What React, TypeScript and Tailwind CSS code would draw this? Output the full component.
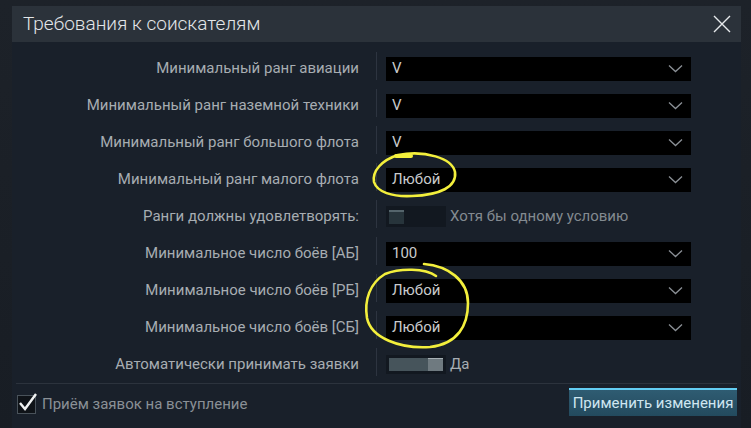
import React from "react";

const font = { fontFamily: "Roboto, 'Noto Sans', sans-serif" };

function Chevron() {
  return (
    <svg width="15" height="9" viewBox="0 0 15 9" className="shrink-0">
      <path d="M1 1.5 L7.5 7.5 L14 1.5" fill="none" stroke="#8b9096" strokeWidth="1.3" />
    </svg>
  );
}

function Select({ value }: { value: string }) {
  return (
    <div className="flex h-[24px] w-[305px] items-center justify-between bg-black pl-[6px] pr-[8px]">
      <span className="text-[15px] text-[#c9cbcc]">{value}</span>
      <Chevron />
    </div>
  );
}

function Toggle({ on }: { on: boolean }) {
  if (on) {
    return (
      <div className="flex h-[19px] w-[60px] items-center bg-[#121820] px-[3px]">
        <div className="h-[13px] w-[39px] bg-[#46545b]" />
        <div className="h-[13px] w-[15px] border-t border-[#a7b0b5] bg-[#6f7a80]" />
      </div>
    );
  }
  return (
    <div className="flex h-[21px] w-[60px] items-center bg-[#121820] px-[3px]">
      <div className="h-[14px] w-[15px] border-t-2 border-[#55656c] bg-[#27343b]" />
    </div>
  );
}

function Row({ label, children }: { label: string; children: React.ReactNode }) {
  return (
    <div className="flex h-[37px] items-center">
      <div className="w-[347px] text-right text-[15px] text-[#a7adb2]">{label}</div>
      <div className="ml-[17px] mb-[6px] h-[28px] w-px bg-[#2d3440]" />
      <div className="ml-[9px] flex items-center">{children}</div>
    </div>
  );
}

export default function App() {
  return (
    <div
      className="relative h-[428px] w-[751px] overflow-hidden bg-gradient-to-b from-[#1d2229] to-[#181d24] pl-[12px] pr-[10px] pt-[6px]"
      style={font}
    >
      <div className="flex h-[36px] items-center justify-between bg-[#2b323a] pl-[11px] pr-[10px]">
        <span className="text-[19px] font-light text-[#e3e6e9]">Требования к соискателям</span>
        <svg width="18" height="18" viewBox="0 0 18 18">
          <path d="M1 1 L17 17 M17 1 L1 17" stroke="#e6e9eb" strokeWidth="1.4" />
        </svg>
      </div>
      <div className="h-[386px] bg-[#19202a] pt-[8px]">
        <Row label="Минимальный ранг авиации"><Select value="V" /></Row>
        <Row label="Минимальный ранг наземной техники"><Select value="V" /></Row>
        <Row label="Минимальный ранг большого флота"><Select value="V" /></Row>
        <Row label="Минимальный ранг малого флота"><Select value="Любой" /></Row>
        <Row label="Ранги должны удовлетворять:">
          <Toggle on={false} />
          <span className="ml-[4px] text-[15px] text-[#838a90]">Хотя бы одному условию</span>
        </Row>
        <Row label="Минимальное число боёв [АБ]"><Select value="100" /></Row>
        <Row label="Минимальное число боёв [РБ]"><Select value="Любой" /></Row>
        <Row label="Минимальное число боёв [СБ]"><Select value="Любой" /></Row>
        <Row label="Автоматически принимать заявки">
          <Toggle on={true} />
          <span className="ml-[4px] text-[15px] text-[#a7adb2]">Да</span>
        </Row>
        <div className="mx-[4px] flex items-start justify-between border-t border-[#2c333d] pt-[4px]">
          <div className="mt-[5px] flex items-center">
            <div className="relative ml-[1px] h-[19px] w-[19px] border border-[#49525a] bg-[#0f1318]">
              <svg width="22" height="20" viewBox="0 0 22 20" className="absolute -left-[1px] -top-[4px]">
                <path d="M3 11 L8 17 L19 2" fill="none" stroke="#f0f2f3" strokeWidth="2.4" />
              </svg>
            </div>
            <span className="ml-[6px] text-[15px] text-[#8a9096]">Приём заявок на вступление</span>
          </div>
          <button className="h-[28px] w-[168px] border-t-2 border-[#63cdf2] bg-gradient-to-b from-[#2f5c72] to-[#234a5e] text-[15px] text-[#cfe6f1]">
            Применить изменения
          </button>
        </div>
      </div>
      <svg
        className="pointer-events-none absolute left-0 top-0"
        width="751"
        height="428"
        viewBox="0 0 751 428"
      >
        <g fill="none" stroke="#f3ef3c" strokeWidth="2.6" strokeLinecap="round" strokeLinejoin="round">
          <path d="M396 156 L411 156" strokeWidth="4" />
          <path d="M398 155 C425 150 452 158 455 172 C457 187 440 195 412 196 C392 197 377 192 374 182 C372 171 382 160 398 155" />
          <path d="M424 264 C448 266 468 280 468 303 C468 325 458 344 430 347 C400 349 371 338 367 318 C364 300 370 283 385 274 C400 268 425 268 436 276" />
        </g>
      </svg>
    </div>
  );
}
